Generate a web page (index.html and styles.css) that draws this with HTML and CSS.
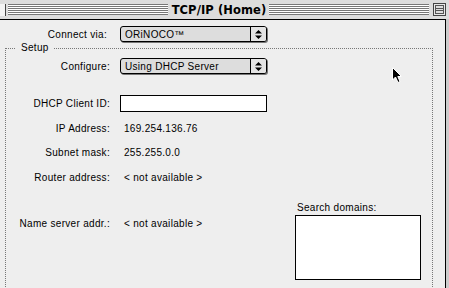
FILE: index.html
```html
<!DOCTYPE html>
<html>
<head>
<meta charset="utf-8">
<link rel="stylesheet" href="styles.css">
</head>
<body>
<div class="screen">
  <div class="titlebar">
    <div class="closebox"></div>
    <div class="stripes"></div>
    <div class="title">TCP/IP (Home)</div>
    <div class="stripes"></div>
    <svg class="zoombox" width="13" height="13" viewBox="0 0 13 13">
      <rect x="0.5" y="0.5" width="12" height="12" fill="#e8e8e8" stroke="#444"/>
      <rect x="2.5" y="2.5" width="8" height="8" fill="#ddd" stroke="#555"/>
      <line x1="2" y1="5.5" x2="11" y2="5.5" stroke="#555"/>
      <line x1="2" y1="7.5" x2="11" y2="7.5" stroke="#555"/>
    </svg>
  </div>
  <div class="body">
    <div class="window">
      <div class="row connect">
        <div class="label wide">Connect via:</div>
        <div class="popup"><span class="ptext">ORiNOCO™</span><span class="parrow">
          <svg width="7" height="9" viewBox="0 0 7 9"><path d="M3.5 0 L7 3.5 H0 Z M0 5.5 H7 L3.5 9 Z" fill="#000"/></svg></span></div>
      </div>
      <fieldset class="setup">
        <legend>Setup</legend>
        <div class="row r-config">
          <div class="label">Configure:</div>
          <div class="popup"><span class="ptext">Using DHCP Server</span><span class="parrow">
            <svg width="7" height="9" viewBox="0 0 7 9"><path d="M3.5 0 L7 3.5 H0 Z M0 5.5 H7 L3.5 9 Z" fill="#000"/></svg></span></div>
        </div>
        <div class="row r-dhcp">
          <div class="label">DHCP Client ID:</div>
          <div class="field"></div>
        </div>
        <div class="row r-ip">
          <div class="label">IP Address:</div>
          <div class="value">169.254.136.76</div>
        </div>
        <div class="row r-subnet">
          <div class="label">Subnet mask:</div>
          <div class="value">255.255.0.0</div>
        </div>
        <div class="row r-router">
          <div class="label">Router address:</div>
          <div class="value">&lt; not available &gt;</div>
        </div>
        <div class="bottom">
          <div class="row r-ns">
            <div class="label">Name server addr.:</div>
            <div class="value">&lt; not available &gt;</div>
          </div>
          <div class="search">
            <div class="slabel">Search domains:</div>
            <div class="sbox"></div>
          </div>
        </div>
      </fieldset>
      <svg class="cursor" width="12" height="18" viewBox="0 0 12 18">
        <path d="M1.5 1.5 V14 L4.5 11 L7 16.5 L9 15.5 L6.8 10.5 H10.5 Z" fill="#000" stroke="#fff" stroke-width="1"/>
      </svg>
    </div>
    <div class="outside"></div>
  </div>
</div>
</body>
</html>
```

FILE: styles.css
```css
html, body {
  margin: 0;
  padding: 0;
}
body {
  width: 449px;
  height: 288px;
  overflow: hidden;
  font-family: "Liberation Sans", Arial, sans-serif;
  font-size: 10px;
  letter-spacing: 0.3px;
  color: #000;
  background: #eeeeee;
}
.screen {
  width: 449px;
  height: 288px;
  display: flex;
  flex-direction: column;
}
.titlebar {
  height: 19px;
  background: #dddddd;
  display: flex;
  align-items: center;
  flex: none;
}
.closebox {
  width: 5px;
  height: 12px;
  background: #f4f4f4;
  border-right: 1px solid #444;
  flex: none;
}
.stripes {
  flex: 1;
  height: 11px;
  margin: 0 3px 0 2px;
  background: repeating-linear-gradient(to bottom, #777 0, #777 1px, #fff 1px, #fff 2px);
}
.title {
  font-family: "DejaVu Sans", sans-serif;
  font-weight: bold;
  font-size: 11.5px;
  padding: 0 1px;
  letter-spacing: 0.1px;
}
.zoombox {
  flex: none;
  margin: 0 3px 0 1px;
}
.body {
  flex: 1;
  display: flex;
  min-height: 0;
}
.window {
  width: 445px;
  border-top: 1px solid #000;
  border-right: 1px solid #000;
  background: #eeeeee;
  position: relative;
  overflow: hidden;
  flex: none;
}
.outside {
  flex: 1;
  background: #cccccc;
}
.row {
  display: flex;
  align-items: center;
  height: 18px;
}
.label {
  width: 104px;
  text-align: right;
  padding-right: 10px;
  flex: none;
  white-space: nowrap;
}
.label.wide {
  width: 107px;
  padding-right: 13px;
}
.value {
  padding-left: 4px;
  white-space: nowrap;
}
.connect {
  margin-top: 5px;
}
.popup {
  width: 145px;
  height: 14px;
  border: 1px solid #000;
  border-radius: 3px;
  box-shadow: 1px 1px 0 #777;
  background: #dddddd;
  display: flex;
  align-items: center;
}
.ptext {
  flex: 1;
  padding-left: 4px;
  white-space: nowrap;
}
.parrow {
  width: 15px;
  height: 14px;
  border-left: 1px solid #000;
  display: flex;
  align-items: center;
  justify-content: center;
  background: #e4e4e4;
  border-radius: 0 2px 2px 0;
}
.setup {
  margin: 0 0 0 5px;
  padding: 0;
  width: 426px;
  height: 300px;
  border: 1px dotted #777;
  box-sizing: content-box;
}
.setup legend {
  margin-left: 10px;
  padding: 0 5px;
  line-height: 10px;
}
.r-config {
  margin-top: 4px;
}
.r-dhcp {
  margin-top: 19px;
}
.field {
  width: 145px;
  height: 15px;
  background: #fff;
  border: 1px solid #000;
}
.r-ip {
  margin-top: 7px;
}
.r-subnet {
  margin-top: 6px;
}
.r-router {
  margin-top: 7px;
}
.bottom {
  display: flex;
  margin-top: 16px;
}
.r-ns {
  margin-top: 12px;
  width: 289px;
  flex: none;
}
.r-ns .label {
  width: 104px;
}
.search {
  display: flex;
  flex-direction: column;
}
.slabel {
  padding-left: 2px;
  height: 12px;
  line-height: 12px;
}
.sbox {
  margin-top: 1px;
  width: 124px;
  height: 63px;
  background: #fff;
  border: 1px solid #000;
}
.cursor {
  position: absolute;
  left: 391px;
  top: 46px;
}
```
